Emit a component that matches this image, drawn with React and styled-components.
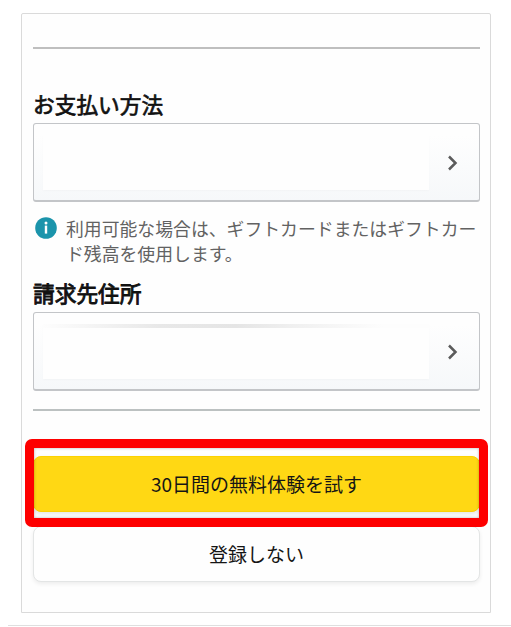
import React from "react";
import styled, { createGlobalStyle } from "styled-components";

const GlobalStyle = createGlobalStyle`
  * {
    box-sizing: border-box;
  }
  body {
    margin: 0;
    background: #fff;
    color: #111;
    font-family: "Noto Sans CJK JP", "Noto Sans", sans-serif;
    overflow: hidden;
  }
`;

const Page = styled.main`
  height: 627px;
  padding: 13px 0 0 8px;
`;

const Panel = styled.section`
  width: 470px;
  height: 600px;
  margin-left: 13px;
  padding: 33px 10px 0 11px;
  display: flex;
  flex-direction: column;
  background: #fefefe;
  border: 1px solid #dadada;
  border-radius: 2px 2px 0 0;
`;

const Divider = styled.hr`
  width: 447px;
  height: 2px;
  flex: none;
  margin: ${props => props.$margin || "0"};
  border: 0;
  background: ${props => props.$color || "#bfbfbf"};
`;

const Heading = styled.h2`
  height: 32px;
  margin: 0 0 3px;
  font-size: 21.7px;
  font-weight: 400;
  line-height: 32px;
  white-space: nowrap;
  -webkit-text-stroke: ${props => props.$stroke || "0.7px"} #111;
`;

const SelectRow = styled.button`
  width: 447px;
  height: 79px;
  flex: none;
  padding: 8px 20px 8px 9px;
  display: flex;
  align-items: center;
  justify-content: space-between;
  border: 1px solid #c3c5c8;
  border-bottom: 2px solid #c3c5c8;
  border-radius: 3px;
  background: linear-gradient(#fefefe 15%, #f6f8fa);
`;

// The hidden value of a row, with the smudge left along its edge
const Masked = styled.span`
  width: 386px;
  height: 55px;
  background: ${props =>
    props.$smudge
      ? "linear-gradient(90deg, #fdfdfd, #e8e8e8 30%, #e5e5e5 50%, #f0f0f0 65%, #fdfdfd 88%) top / 100% 4px no-repeat, #fefefe"
      : "#fefefe"};
  box-shadow: 0 1px 2px rgba(0, 0, 0, 0.025);
`;

const Chevron = styled.svg`
  width: 12px;
  height: 16px;
  margin-top: 1px;
  fill: none;
  stroke: #5b5b5b;
  stroke-width: 2.5;
`;

const Note = styled.div`
  height: 75px;
  flex: none;
  padding: 15px 0 0 2px;
  display: flex;
  gap: 9px;
`;

const InfoIcon = styled.svg`
  width: 22px;
  height: 22px;
  flex: none;
`;

const NoteText = styled.p`
  margin: -1px 0 0;
  color: #626262;
  font-size: 17.85px;
  line-height: 24.5px;
  white-space: nowrap;
`;

const Actions = styled.div`
  padding-top: 45px;
  display: flex;
  flex-direction: column;
  gap: 14px;
`;

const Button = styled.button`
  width: 447px;
  height: 56px;
  padding: 0;
  border: 1px solid ${props => (props.$primary ? "#fcd200" : "#e3e5e5")};
  border-radius: 8px;
  background: ${props => (props.$primary ? "#ffd814" : "#fefefe")};
  box-shadow: 0 2px 4px rgba(0, 0, 0, ${props => (props.$primary ? 0.1 : 0.07)});
  color: #151515;
  font-family: inherit;
  font-size: 19px;
  line-height: 28px;
`;

const Highlighted = styled.div`
  position: relative;
  height: 56px;

  &::after {
    content: "";
    position: absolute;
    box-sizing: border-box;
    z-index: 1;
    top: -17px;
    left: -8px;
    width: 463px;
    height: 88px;
    border: 9.5px solid #fe0000;
    border-radius: 7px;
    box-shadow: inset 0 0 3px rgba(0, 0, 0, 0.3);
  }
`;

const PageRule = styled.hr`
  width: 503px;
  height: 1px;
  margin: 12px 0 0;
  border: 0;
  background: #dfdfdf;
`;

function ArrowRight() {
  return (
    <Chevron viewBox="0 0 12 16">
      <path d="M2 1.5 L8.5 8 L2 14.5" />
    </Chevron>
  );
}

export default function App() {
  return (
    <>
      <GlobalStyle />
      <Page>
        <Panel>
          <Divider $margin="0 0 39px" />
          <Heading>お支払い方法</Heading>
          <SelectRow>
            <Masked />
            <ArrowRight />
          </SelectRow>
          <Note>
            <InfoIcon viewBox="0 0 22 22">
              <circle cx="11" cy="11" r="10.8" fill="#1b94ab" />
              <circle cx="11" cy="6" r="1.5" fill="#fff" />
              <rect x="9.8" y="8.6" width="2.4" height="8" fill="#fff" />
            </InfoIcon>
            <NoteText>
              利用可能な場合は、ギフトカードまたはギフトカー
              <br />
              ド残高を使用します。
            </NoteText>
          </Note>
          <Heading $stroke="0.9px">請求先住所</Heading>
          <SelectRow>
            <Masked $smudge />
            <ArrowRight />
          </SelectRow>
          <Divider $margin="18px 0 0" $color="#bcc1c1" />
          <Actions>
            <Highlighted>
              <Button $primary>30日間の無料体験を試す</Button>
            </Highlighted>
            <Button>登録しない</Button>
          </Actions>
        </Panel>
        <PageRule />
      </Page>
    </>
  );
}
